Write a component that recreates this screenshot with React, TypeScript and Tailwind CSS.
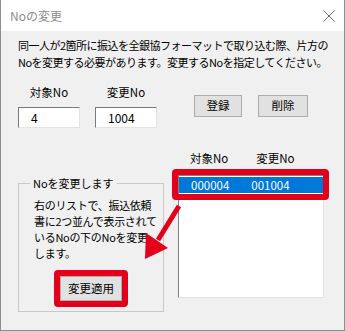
import React from "react";

function CloseIcon() {
  return (
    <svg width="12" height="12" viewBox="0 0 12 12" className="block">
      <path d="M0.5 0.5 L11.5 11.5 M11.5 0.5 L0.5 11.5" stroke="#6b6b6b" strokeWidth="1" fill="none" />
    </svg>
  );
}

function WinButton({ label, className = "" }: { label: string; className?: string }) {
  return (
    <button
      className={`bg-[#e1e1e1] border border-[#adadad] text-[11.5px] leading-none text-black ${className}`}
    >
      {label}
    </button>
  );
}

function NumberBox({ value }: { value: string }) {
  return (
    <div className="w-[62px] h-[21px] bg-white border border-t-[#7a7a7a] border-l-[#7a7a7a] border-r-[#e3e3e3] border-b-[#e3e3e3] flex items-center pl-[12px] text-[12px]">
      {value}
    </div>
  );
}

export default function App() {
  return (
    <div className="relative w-[345px] h-[331px] flex flex-col bg-[#f0f0f0] border-x border-b border-[#8e8e8e] font-['Noto_Sans_CJK_JP',sans-serif] text-black overflow-hidden">
      {/* Title bar */}
      <div className="h-[31px] bg-white flex items-center justify-between pl-[9px] pr-[9px] shrink-0">
        <span className="text-[12px] text-[#8c8c8c]">Noの変更</span>
        <CloseIcon />
      </div>

      <div className="pl-[17px] flex flex-col">
        {/* Description */}
        <p className="pt-[6px] text-[11px] leading-[17px] tracking-[-0.5px]">
          同一人が2箇所に振込を全銀協フォーマットで取り込む際、片方の
          <br />
          Noを変更する必要があります。変更するNoを指定してください。
        </p>

        {/* Inputs and buttons */}
        <div className="flex mt-[14px]">
          <div className="flex flex-col w-[62px]">
            <span className="text-[11.5px] leading-[14px] text-center">対象No</span>
            <div className="mt-[8px]">
              <NumberBox value="4" />
            </div>
          </div>
          <div className="flex flex-col w-[62px] ml-[15px]">
            <span className="text-[11.5px] leading-[14px] text-center">変更No</span>
            <div className="mt-[8px]">
              <NumberBox value="1004" />
            </div>
          </div>
          <div className="flex gap-[16px] ml-[37px] mt-[10px]">
            <WinButton label="登録" className="w-[48px] h-[22px]" />
            <WinButton label="削除" className="w-[50px] h-[22px]" />
          </div>
        </div>

        {/* Group box and list */}
        <div className="flex items-start mt-[23px]">
          <div className="relative w-[146px] h-[129px] mt-[32px] border border-[#c8c8c8] flex flex-col">
            <span className="absolute -top-[9px] left-[11px] px-[3px] bg-[#f0f0f0] text-[11px] leading-[16px]">
              Noを変更します
            </span>
            <p className="pl-[15px] pt-[13px] text-[11px] leading-[16px] tracking-[-0.3px]">
              右のリストで、振込依頼
              <br />
              書に2つ並んで表示されて
              <br />
              いるNoの下のNoを変更
              <br />
              します。
            </p>
            <div className="mt-[9px] mx-auto w-fit border-[6px] border-[#e2001a] rounded-[4px]">
              <WinButton label="変更適用" className="block w-[62px] h-[25px]" />
            </div>
          </div>

          <div className="flex flex-col ml-[14px]">
            <div className="flex text-[11.5px] leading-[14px] pl-[12px] gap-[28px]">
              <span>対象No</span>
              <span>変更No</span>
            </div>
            <div className="relative mt-[10px] w-[146px] h-[123px] bg-white border border-t-[#828282] border-l-[#828282] border-r-[#e3e3e3] border-b-[#e3e3e3] pt-[1px]">
              <div className="h-[16px] bg-[#0078d7] text-white text-[11.5px] leading-[16px] flex pl-[12px] gap-[22px]">
                <span>000004</span>
                <span>001004</span>
              </div>
              <div className="absolute -left-[7px] -top-[7px] w-[157px] h-[31px] border-[6px] border-[#e2001a] rounded-[4px]" />
            </div>
          </div>
        </div>
      </div>

      {/* Annotation arrow */}
      <svg className="absolute left-0 top-0 pointer-events-none" width="345" height="331">
        <line x1="178" y1="206" x2="157" y2="240" stroke="#e2001a" strokeWidth="5" />
        <polygon points="144,259 145,233 167,248" fill="#e2001a" />
      </svg>
    </div>
  );
}
